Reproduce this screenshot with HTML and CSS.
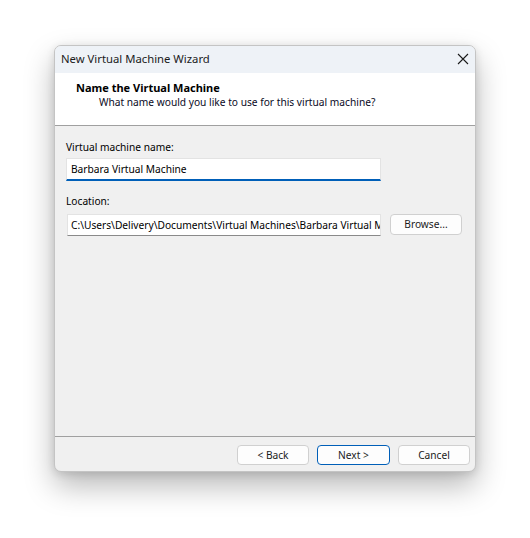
FILE: index.html
```html
<!DOCTYPE html>
<html>
<head>
<meta charset="utf-8">
<link rel="stylesheet" href="styles.css">
</head>
<body>
<div class="stage">
  <div class="dialog">
    <div class="titlebar">
      <span class="title">New Virtual Machine Wizard</span>
      <svg class="close" width="12" height="12" viewBox="0 0 12 12"><path d="M1 1 L11 11 M11 1 L1 11" stroke="#1b1b1b" stroke-width="1.1" fill="none"/></svg>
    </div>
    <div class="header">
      <div class="h-title">Name the Virtual Machine</div>
      <div class="h-sub">What name would you like to use for this virtual machine?</div>
    </div>
    <div class="body">
      <div class="label">Virtual machine name:</div>
      <div class="input name-input">Barbara Virtual Machine</div>
      <div class="label loc-label">Location:</div>
      <div class="loc-row">
        <div class="input loc-input">C:\Users\Delivery\Documents\Virtual Machines\Barbara Virtual Machine</div>
        <div class="btn browse">Browse...</div>
      </div>
    </div>
    <div class="footer">
      <div class="btn">&lt; Back</div>
      <div class="btn primary">Next &gt;</div>
      <div class="btn">Cancel</div>
    </div>
  </div>
</div>
</body>
</html>
```

FILE: styles.css
```css
html, body {
  margin: 0;
  padding: 0;
  background: #ffffff;
  min-height: 100vh;
}
body {
  font-family: "Noto Sans", "Open Sans", "DejaVu Sans", sans-serif;
  font-size: 10.2px;
  color: #000;
}
.stage {
  padding: 45px 0 0 54px;
}
.dialog {
  width: 422px;
  height: 427px;
  box-sizing: border-box;
  background: #f0f0f0;
  border: 1px solid #c4c4c4;
  border-radius: 7px;
  overflow: hidden;
  box-shadow: 0 14px 30px rgba(0,0,0,0.28), 0 2px 8px rgba(0,0,0,0.12);
  display: flex;
  flex-direction: column;
}
.titlebar {
  height: 27px;
  box-sizing: border-box;
  background: #eef2f7;
  display: flex;
  align-items: center;
  justify-content: space-between;
  padding: 0 6px 3px 6px;
  flex: none;
}
.title {
  font-size: 11.3px;
  color: #1b1b1b;
}
.close {
  display: block;
  margin-top: 1px;
}
.header {
  height: 53px;
  box-sizing: border-box;
  background: #ffffff;
  border-bottom: 1px solid #a0a0a0;
  padding: 7px 0 0 21px;
  flex: none;
}
.h-title {
  font-weight: bold;
  font-size: 11px;
  line-height: 15px;
  color: #000;
}
.h-sub {
  line-height: 15px;
  margin-left: 23px;
  color: #0a0a1e;
}
.body {
  flex: 1;
  padding: 13px 0 0 11px;
}
.label {
  line-height: 16px;
}
.loc-label {
  margin-top: 12px;
}
.input {
  background: #fff;
  box-sizing: border-box;
  white-space: nowrap;
  overflow: hidden;
  padding-left: 4px;
}
.name-input {
  width: 315px;
  height: 23px;
  margin-top: 3px;
  border: 1px solid #e3e3e3;
  border-bottom: 2px solid #005fb8;
  line-height: 20px;
}
.loc-row {
  display: flex;
  align-items: flex-start;
  margin-top: 5px;
  gap: 9px;
}
.loc-input {
  width: 314px;
  height: 22px;
  margin-left: 1px;
  border: 1px solid #e3e3e3;
  border-bottom: 1px solid #8a8a8a;
  line-height: 20px;
  padding-left: 3px;
}
.btn {
  width: 72px;
  height: 20px;
  box-sizing: border-box;
  border: 1px solid #d0d0d0;
  border-radius: 4px;
  background: #fdfdfd;
  text-align: center;
  line-height: 18px;
  color: #1b1b1b;
}
.browse {
  height: 21px;
  line-height: 19px;
}
.primary {
  border-color: #005fb8;
  width: 73px;
}
.footer {
  flex: none;
  height: 35px;
  box-sizing: border-box;
  border-top: 1px solid #a0a0a0;
  display: flex;
  justify-content: flex-end;
  gap: 8px;
  padding: 8px 5px 0 0;
}
```
